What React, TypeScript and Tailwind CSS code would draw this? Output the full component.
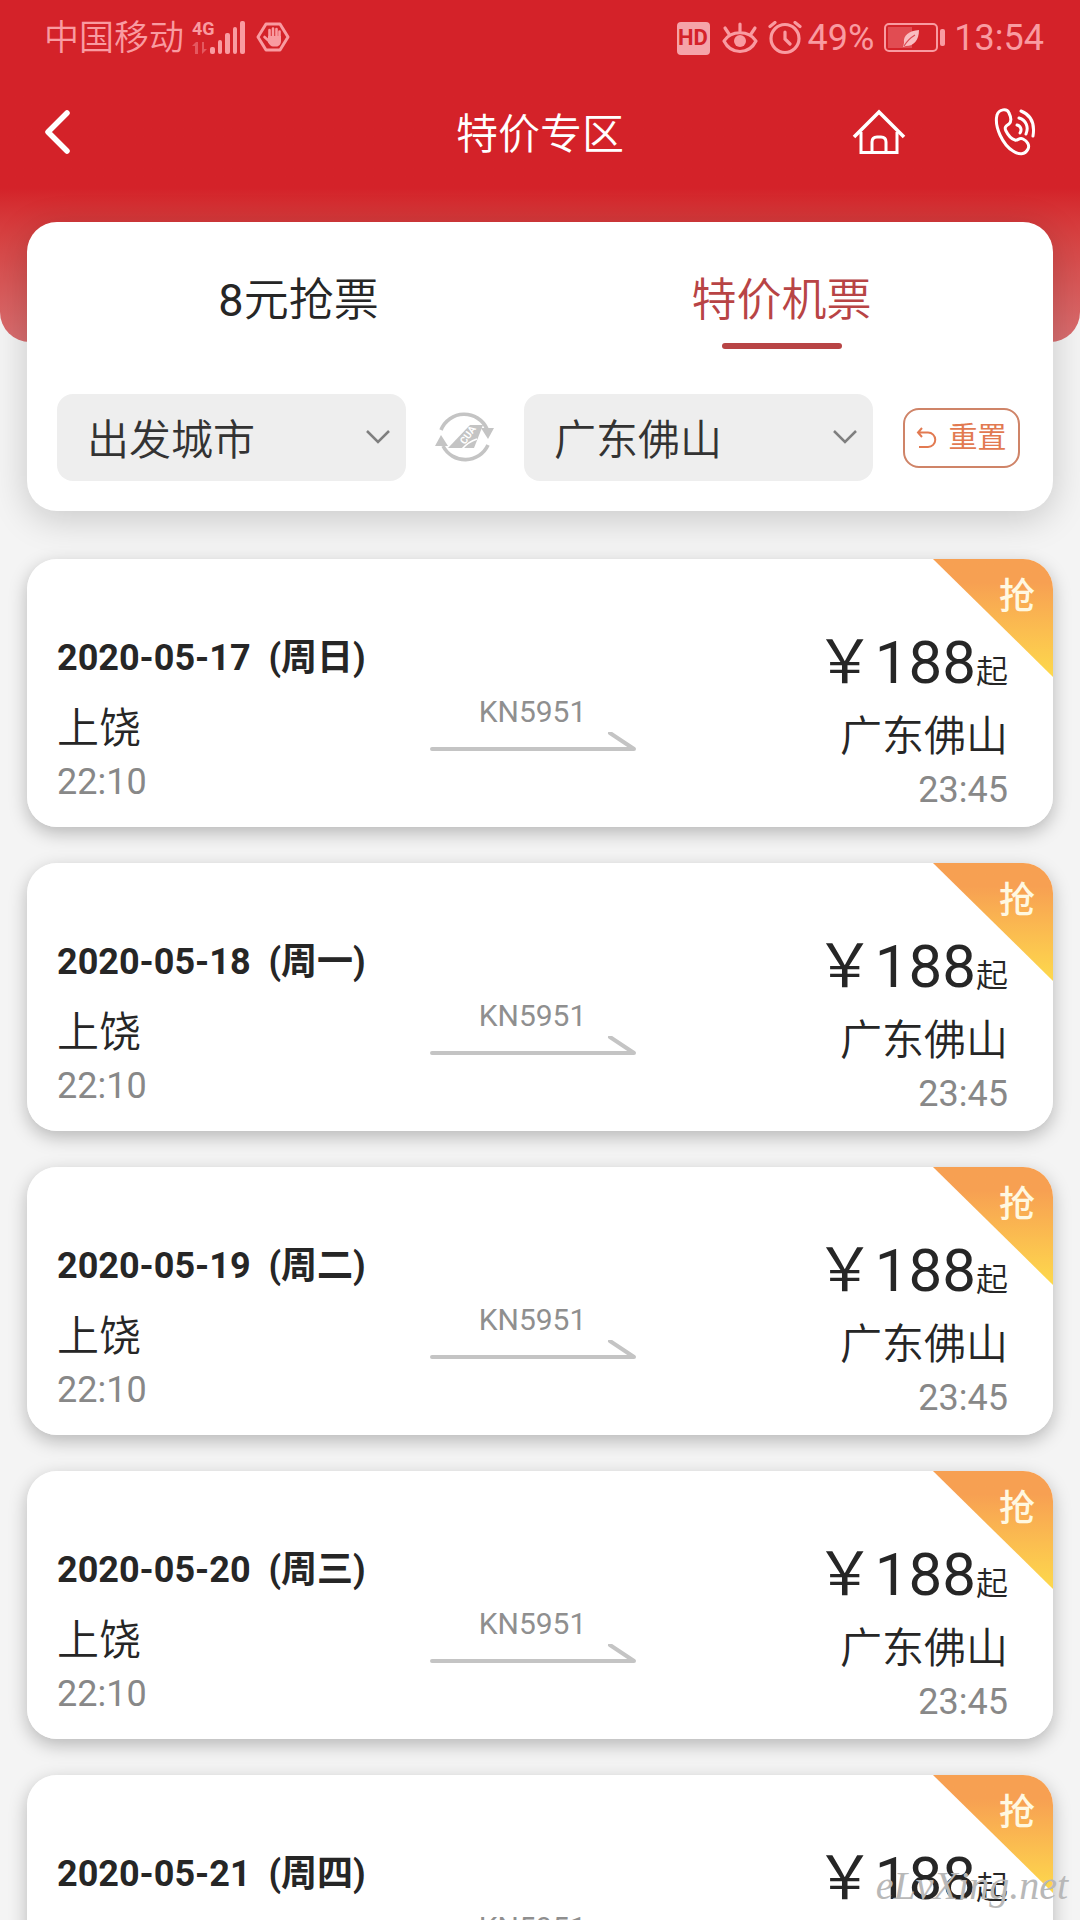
import React, { FC, useState } from "react";

const TABS = [
  { price: "8", name: "元抢票" },
  { price: "", name: "特价机票" },
];

const FLIGHTS = [
  { date: "2020-05-17", week: "周日" },
  { date: "2020-05-18", week: "周一" },
  { date: "2020-05-19", week: "周二" },
  { date: "2020-05-20", week: "周三" },
  { date: "2020-05-21", week: "周四" },
];

const StatusBar: FC = () => (
  <div className="flex h-[76px] items-center justify-between pl-11 pr-9 text-4xl text-[#f99ba1]">
    <div className="flex items-center">
      <span className="pt-0.5 text-[35px] font-[350]">中国移动</span>
      <svg width="54" height="36" viewBox="0 0 54 36" className="ml-2 overflow-visible" fill="currentColor">
        <text x="0" y="15" fontSize="18" fontWeight="700" fontFamily="Roboto" fill="currentColor">
          4G
        </text>
        <g opacity="0.45">
          <path d="M0 26l4-4h2v12H3v-8z" />
          <path d="M10 22h2v7h3l-5 5z" />
        </g>
        <rect x="18" y="27" width="5" height="7" rx="2" />
        <rect x="26" y="20" width="4" height="14" rx="2" />
        <rect x="33" y="13" width="5" height="21" rx="2" />
        <rect x="41" y="7" width="4" height="27" rx="2" />
        <rect x="48" y="1" width="5" height="33" rx="2" />
      </svg>
      <svg width="34" height="32" viewBox="0 0 34 32" className="ml-2.5">
        <path
          d="M10 2h14l8 13-8 13H10L2 15z"
          fill="none"
          stroke="currentColor"
          strokeWidth="3"
          strokeLinejoin="round"
        />
        <g stroke="currentColor" strokeWidth="2.6" strokeLinecap="round">
          <path d="M13.5 8v8M17 6.500v9M20.500 7v9M23.500 9.500v8M8.500 15l5 4.500" />
        </g>
        <path d="M12 14h13v5c0 3-2 5.500-4.500 5.500H17c-2 0-3-1.500-5-4z" fill="currentColor" />
      </svg>
    </div>
    <div className="flex items-center">
      <span className="flex h-[33px] w-[33px] items-center justify-center rounded bg-[#f5a3a9] text-[22px] font-bold text-[#d42229]">
        HD
      </span>
      <svg width="36" height="33" viewBox="0 0 36 33" className="ml-3" fill="none" stroke="currentColor">
        <path d="M2 19C9 8 27 8 34 19C27 33 9 33 2 19z" strokeWidth="3.200" strokeLinejoin="round" />
        <path d="M18 2v7M3 6l4 6M33 6l-4 6" strokeWidth="3.200" strokeLinecap="round" />
        <circle cx="18" cy="19" r="6" fill="currentColor" stroke="none" />
      </svg>
      <svg
        width="34"
        height="34"
        viewBox="0 0 34 34"
        className="ml-2.5"
        fill="none"
        stroke="currentColor"
        strokeWidth="3.200"
        strokeLinecap="round"
      >
        <circle cx="17" cy="17.500" r="14" />
        <path d="M17 11v7l5 5M2 5.500l5-4M32 5.500l-5-4" />
      </svg>
      <span className="ml-1.5">49%</span>
      <svg width="62" height="30" viewBox="0 0 62 30" className="ml-2.5">
        <rect x="1" y="1" width="52" height="27" rx="4" fill="none" stroke="currentColor" strokeWidth="2" />
        <rect x="4" y="4" width="24" height="21" fill="currentColor" opacity="0.35" />
        <rect x="56" y="6" width="5" height="17" rx="2" fill="currentColor" />
        <path d="M35 7c-10 1-16 5-15 13l-1 4 3-1c8 0 13-6 13-16z" fill="#f9bcc0" />
        <path d="M20 23c3-5 6-8 11-11" stroke="#dc4a52" strokeWidth="1.200" fill="none" />
      </svg>
      <span className="ml-2">13:54</span>
    </div>
  </div>
);

const NavBar: FC = () => (
  <nav className="grid grid-cols-3 items-center pl-11 pr-11 text-white">
    <button type="button" aria-label="返回" className="justify-self-start">
      <svg width="28" height="46" viewBox="0 0 28 46">
        <path
          d="M23 4L4 23l19 19"
          fill="none"
          stroke="currentColor"
          strokeWidth="5.500"
          strokeLinecap="round"
          strokeLinejoin="round"
        />
      </svg>
    </button>
    <h1 className="pt-1.5 text-center text-[42px] font-[350] leading-[60px]">特价专区</h1>
    <div className="flex items-center justify-end gap-[88px]">
      <a href="#home" aria-label="首页">
        <svg width="54" height="48" viewBox="0 0 54 48" fill="none" stroke="currentColor" strokeWidth="3">
          <path d="M2 29L27 4l25 25" strokeWidth="3.600" />
          <path d="M9 24v20.500h36V24" />
          <path d="M20 44V34q0-5 5-5h4q5 0 5 5v10" />
        </svg>
      </a>
      <a href="#phone" aria-label="客服电话">
        <svg
          width="42"
          height="48"
          viewBox="0 0 42 48"
          fill="none"
          stroke="currentColor"
          strokeWidth="3"
          strokeLinecap="round"
          strokeLinejoin="round"
        >
          <path d="M3 7C5 1 13 0 15 5C17 9 18 13 15 16C12 18 10 19 12 23C14 27 17 31 21 32C24 33 25 29 29 31C33 33 36 37 34 41C31 47 25 47 19 43C9 37 0 19 3 7z" />
          <path d="M23 17c4 1 5 5 3 8M25 10c7 2 10 9 7 16M27 3c10 4 14 13 12 25" />
        </svg>
      </a>
    </div>
  </nav>
);

const CitySelect: FC<SelectProps> = ({ label, value }) => (
  <label className="relative flex-1">
    <select
      aria-label={label}
      defaultValue={value}
      className="h-[87px] w-full appearance-none rounded-2xl bg-[#eeeeee] pl-[30px] pr-16 pt-1.5 text-[42px] font-[350] text-[#333333]"
    >
      <option>{value}</option>
    </select>
    <svg width="24" height="16" viewBox="0 0 24 16" className="pointer-events-none absolute right-4 top-[35px]">
      <path d="M1 2l11 11L23 2" fill="none" stroke="#7f7f7f" strokeWidth="2.500" />
    </svg>
  </label>
);

const SwapIcon: FC = () => (
  <svg width="60" height="54" viewBox="0 0 60 54" fill="#c4c4c4">
    <g fill="none" stroke="#c4c4c4" strokeWidth="3.600">
      <path d="M6 19A25 25 0 0 1 52 18" />
      <path d="M53 34A25 25 0 0 1 8 35" />
    </g>
    <path d="M46 17h13l-6 11z" />
    <path d="M0 35l6-11 7 11z" />
    <path d="M13 37L35 14h13l-9 23z" />
    <path d="M27 38q6-7 15-10" fill="none" stroke="#ffffff" strokeWidth="1.500" />
    <text
      x="30"
      y="34"
      fontSize="10"
      fontWeight="700"
      fontFamily="Roboto"
      fill="#ffffff"
      transform="rotate(-55 30 34)"
    >
      CUA
    </text>
  </svg>
);

const SearchCard: FC = () => {
  const [active, setActive] = useState(1);

  return (
    <section className="relative z-10 mx-[27px] -mt-[120px] rounded-[30px] bg-white px-[30px] pb-[30px] pt-11 shadow-[0_8px_36px_rgba(0,0,0,0.18)]">
      <div className="flex">
        {TABS.map((tab, index) => (
          <button
            key={tab.name}
            type="button"
            onClick={() => setActive(index)}
            className={
              active === index
                ? "flex flex-1 flex-col items-center text-[45px] leading-[70px] text-[#b84445]"
                : "flex flex-1 flex-col items-center text-[45px] leading-[70px] text-[#262626]"
            }
          >
            <span className="h-[70px]">
              {tab.price}
              <span className="font-[350]">{tab.name}</span>
            </span>
            <span className={active === index ? "mt-[7px] h-[6px] w-[120px] rounded-full bg-[#b84445]" : "mt-[7px] h-[6px]"} />
          </button>
        ))}
      </div>
      <div className="mt-[45px] flex items-center pr-[3px]">
        <CitySelect label="出发城市" value="出发城市" />
        <button type="button" aria-label="交换城市" className="flex w-[118px] justify-center">
          <SwapIcon />
        </button>
        <CitySelect label="到达城市" value="广东佛山" />
        <button
          type="button"
          className="ml-[30px] flex h-[60px] w-[117px] items-center justify-center gap-2.5 rounded-2xl border-2 border-[#cf8468] text-[29px] text-[#e27a51]"
        >
          <svg width="22" height="22" viewBox="0 0 22 22" fill="none" stroke="currentColor" strokeWidth="2">
            <path d="M6 1L2 5.500 6 10M2 5.500h10a7 7 0 0 1 0 14.500H3" />
          </svg>
          <span className="pt-0.5">重置</span>
        </button>
      </div>
    </section>
  );
};

const FlightCard: FC<FlightProps> = ({ date, week }) => (
  <article className="relative grid h-[268px] shrink-0 grid-cols-[1fr_206px_1fr] overflow-hidden rounded-[30px] bg-white pl-[30px] pr-[45px] text-[#262626]">
    <div className="pt-[75px]">
      <div className="whitespace-nowrap text-4xl font-bold leading-[48px]">
        {date}&nbsp;&nbsp;({week})
      </div>
      <div className="mt-[17px] text-[42px] font-[350] leading-[60px]">上饶</div>
      <div className="text-4xl leading-[46px] text-[#888888]">22:10</div>
    </div>
    <div className="flex flex-col items-center pt-[133px]">
      <div className="text-3xl leading-[40px] text-[#8f8f8f]">KN5951</div>
      <svg width="206" height="22" viewBox="0 0 206 22">
        <path
          d="M2 17h202L180 1"
          fill="none"
          stroke="#c4c4c4"
          strokeWidth="4"
          strokeLinecap="round"
          strokeLinejoin="round"
        />
      </svg>
    </div>
    <div className="pt-[68px] text-right">
      <div className="flex h-[72px] items-baseline justify-end whitespace-nowrap text-6xl leading-[72px]">
        <span>￥188</span>
        <span className="text-[32px] font-[350]">起</span>
      </div>
      <div className="mt-2 text-[42px] font-[350] leading-[60px]">广东佛山</div>
      <div className="text-4xl leading-[46px] text-[#888888]">23:45</div>
    </div>
    <div className="absolute right-0 top-0 h-[118px] w-[120px] bg-linear-to-b from-[#f7a052] from-20% to-[#fdd94c] pl-[66px] pt-3.5 text-4xl font-medium leading-[48px] text-[#fff8e0] [clip-path:polygon(0_0,100%_0,100%_100%)]">
      抢
    </div>
  </article>
);

export default function App() {
  return (
    <div
      lang="zh-CN"
      className="relative flex h-screen flex-col overflow-hidden bg-[#f4f4f4] font-[Roboto,'Noto_Sans_CJK_SC',sans-serif]"
    >
      <header className="h-[342px] shrink-0 rounded-b-[30px] bg-linear-to-b from-[#d42229] from-55% to-[#d96e70]">
        <StatusBar />
        <div className="pt-[23px]">
          <NavBar />
        </div>
      </header>
      <SearchCard />
      <main className="flex flex-1 flex-col gap-9 overflow-hidden px-[27px] pt-12">
        {FLIGHTS.map((flight) => (
          <div key={flight.date} className="rounded-[30px] shadow-[0_6px_18px_rgba(0,0,0,0.25)]">
            <FlightCard {...flight} />
          </div>
        ))}
      </main>
      <div className="absolute bottom-2.5 right-3 z-20 font-['Liberation_Serif',serif] text-[40px] italic leading-[48px] text-[#b8b8b8]">
        eLvXing.net
      </div>
    </div>
  );
}

type SelectProps = {
  label: string;
  value: string;
};

type FlightProps = {
  date: string;
  week: string;
};
